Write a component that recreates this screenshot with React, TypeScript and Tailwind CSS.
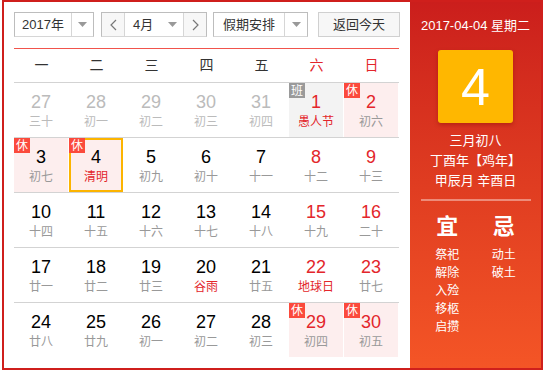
type Day = {
  n: number;
  l: string;
  off?: boolean;
  red?: boolean;
  fest?: boolean;
  tag?: "休" | "班";
  today?: boolean;
};

const weeks: Day[][] = [
  [
    { n: 27, l: "三十", off: true },
    { n: 28, l: "初一", off: true },
    { n: 29, l: "初二", off: true },
    { n: 30, l: "初三", off: true },
    { n: 31, l: "初四", off: true },
    { n: 1, l: "愚人节", red: true, fest: true, tag: "班" },
    { n: 2, l: "初六", red: true, tag: "休" },
  ],
  [
    { n: 3, l: "初七", tag: "休" },
    { n: 4, l: "清明", fest: true, tag: "休", today: true },
    { n: 5, l: "初九" },
    { n: 6, l: "初十" },
    { n: 7, l: "十一" },
    { n: 8, l: "十二", red: true },
    { n: 9, l: "十三", red: true },
  ],
  [
    { n: 10, l: "十四" },
    { n: 11, l: "十五" },
    { n: 12, l: "十六" },
    { n: 13, l: "十七" },
    { n: 14, l: "十八" },
    { n: 15, l: "十九", red: true },
    { n: 16, l: "二十", red: true },
  ],
  [
    { n: 17, l: "廿一" },
    { n: 18, l: "廿二" },
    { n: 19, l: "廿三" },
    { n: 20, l: "谷雨", fest: true },
    { n: 21, l: "廿五" },
    { n: 22, l: "地球日", red: true, fest: true },
    { n: 23, l: "廿七", red: true },
  ],
  [
    { n: 24, l: "廿八" },
    { n: 25, l: "廿九" },
    { n: 26, l: "初一" },
    { n: 27, l: "初二" },
    { n: 28, l: "初三" },
    { n: 29, l: "初四", red: true, tag: "休" },
    { n: 30, l: "初五", red: true, tag: "休" },
  ],
];

const weekdays = ["一", "二", "三", "四", "五", "六", "日"];

const Caret = () => (
  <svg width="9" height="5" viewBox="0 0 9 5">
    <path d="M0 0 H9 L4.5 5 Z" fill="#999" />
  </svg>
);

const Chevron = ({ dir }: { dir: "l" | "r" }) => (
  <svg width="7" height="12" viewBox="0 0 7 12">
    <path
      d={dir === "l" ? "M6 1 L1 6 L6 11" : "M1 1 L6 6 L1 11"}
      fill="none"
      stroke="#777"
      strokeWidth="1.2"
    />
  </svg>
);

const Cell = ({ d }: { d: Day }) => {
  const bg =
    d.tag === "班" ? "bg-[#f3f3f3]" : d.tag === "休" ? "bg-[#fdeeee]" : "bg-white";
  const numColor = d.off ? "text-[#bbbbbb]" : d.red ? "text-[#e3262b]" : "text-black";
  const lunarColor = d.off
    ? "text-[#bbbbbb]"
    : d.fest
    ? "text-[#e3262b]"
    : "text-[#999999]";
  return (
    <div className={`relative mr-px h-[54px] flex flex-col items-center pt-[9px] ${bg}`}>
      {d.today && (
        <div className="absolute inset-0 border-2 border-[#fcb400]" />
      )}
      {d.tag && (
        <div
          className={`absolute left-0 top-0 z-10 w-[16px] h-[15px] flex items-center justify-center text-[12px] leading-none text-white ${
            d.tag === "休" ? "bg-[#fb4a3c]" : "bg-[#9a9a9a]"
          }`}
        >
          {d.tag}
        </div>
      )}
      <div className={`text-[18px] leading-[20px] ${numColor}`}>{d.n}</div>
      <div className={`mt-[2px] text-[12px] leading-[16px] ${lunarColor}`}>{d.l}</div>
    </div>
  );
};

const App = () => {
  return (
    <div
      className="w-[543px] h-[372px] overflow-hidden bg-white pl-[2px]"
      style={{ fontFamily: '"Liberation Sans", "Noto Sans CJK SC", sans-serif' }}
    >
      <div className="w-[541px] h-[370px] border-2 border-[#cf1f1c] flex">
        {/* left: calendar */}
        <div className="w-[406px] h-full bg-white pl-[10px] pt-[10px]">
          <div className="flex items-center h-[25px] text-[13px] text-[#333] whitespace-nowrap">
            <div className="flex h-[25px] w-[80px] border border-[#bdbdbd] border-b-[#d6d6d6]">
              <div className="w-[56px] flex items-center justify-center">2017年</div>
              <div className="flex-1 flex items-center justify-center border-l border-[#d6d6d6]">
                <Caret />
              </div>
            </div>
            <div className="ml-[7px] flex h-[25px] w-[106px] border border-[#bdbdbd] border-b-[#d6d6d6]">
              <div className="w-[22px] shrink-0 flex items-center justify-center bg-[#f7f7f7]">
                <Chevron dir="l" />
              </div>
              <div className="w-[60px] shrink-0 flex items-center justify-between border-l border-r border-[#d6d6d6] pl-[8px] pr-[6px]">
                <span>4月</span>
                <Caret />
              </div>
              <div className="flex-1 flex items-center justify-center bg-[#f7f7f7]">
                <Chevron dir="r" />
              </div>
            </div>
            <div className="ml-[6px] flex h-[25px] w-[95px] border border-[#bdbdbd] border-b-[#d6d6d6]">
              <div className="w-[70px] flex items-center justify-center">假期安排</div>
              <div className="flex-1 flex items-center justify-center border-l border-[#d6d6d6]">
                <Caret />
              </div>
            </div>
            <div className="ml-[10px] flex h-[25px] w-[82px] items-center justify-center border border-[#d0d0d0] bg-[#f7f7f7]">
              返回今天
            </div>
          </div>

          <div className="mt-[11px] w-[385px] border-t border-[#f1544c]">
            <div className="grid grid-cols-[repeat(7,55px)] h-[34px] border-b border-[#d3d3d3] text-[14px]">
              {weekdays.map((w, i) => (
                <div
                  key={w}
                  className={`flex items-center justify-center ${
                    i >= 5 ? "text-[#e3262b]" : "text-[#333]"
                  }`}
                >
                  {w}
                </div>
              ))}
            </div>
            {weeks.map((row, ri) => (
              <div
                key={ri}
                className={`grid grid-cols-[repeat(7,55px)] ${
                  ri < weeks.length - 1 ? "h-[55px] border-b border-[#d3d3d3]" : "h-[54px]"
                }`}
              >
                {row.map((d, ci) => (
                  <Cell key={ci} d={d} />
                ))}
              </div>
            ))}
          </div>
        </div>

        {/* right: today detail */}
        <div className="flex-1 h-full bg-linear-to-b from-[#cb1e1c] to-[#f45526] text-white flex flex-col items-center pt-[14px]">
          <div className="text-[13px] leading-[20px]">2017-04-04 星期二</div>
          <div className="mt-[14px] w-[75px] h-[73px] rounded-[3px] bg-[#ffb700] shadow-[0_2px_4px_rgba(120,0,0,0.35)] flex items-center justify-center text-[52px] leading-none">
            4
          </div>
          <div className="mt-[8px] text-[13px] leading-[20px] text-center">
            <div>三月初八</div>
            <div>丁酉年【鸡年】</div>
            <div>甲辰月 辛酉日</div>
          </div>
          <div className="mt-[8px] w-[110px] h-[2px] bg-white/40" />
          <div className="mt-[11px] w-full px-[9px] grid grid-cols-2">
            <div className="flex flex-col items-center">
              <div className="text-[22px] leading-[30px] font-bold">宜</div>
              <div className="mt-[4px] text-[12px] leading-[18px] flex flex-col items-center">
                <span>祭祀</span>
                <span>解除</span>
                <span>入殓</span>
                <span>移柩</span>
                <span>启攒</span>
              </div>
            </div>
            <div className="flex flex-col items-center">
              <div className="text-[22px] leading-[30px] font-bold">忌</div>
              <div className="mt-[4px] text-[12px] leading-[18px] flex flex-col items-center">
                <span>动土</span>
                <span>破土</span>
              </div>
            </div>
          </div>
        </div>
      </div>
    </div>
  );
};

export default App;
